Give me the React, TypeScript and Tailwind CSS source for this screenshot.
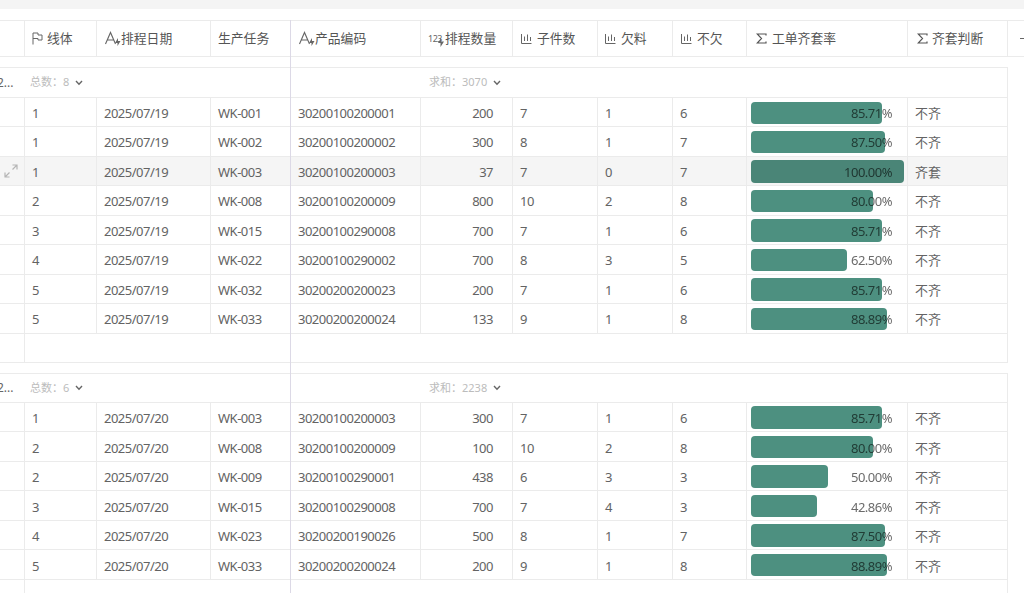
import React from 'react';

const AIcon = () => (
  <svg width="17" height="18" viewBox="0 0 17 18" fill="none" stroke="#666" strokeWidth="1.1" className="shrink-0">
    <path d="M1.5 14 L6.5 2.5 L11.5 14 M3.3 10 H9.7" />
    <path d="M14 8 V11 H16.5 L13.5 16 V13 H11 Z" fill="#666" stroke="none" />
  </svg>
);

const NumIcon = () => (
  <span className="relative inline-block h-[16px] w-[17px] shrink-0 text-[9px] leading-[16px] tracking-[-0.5px] text-[#666]">
    123
    <svg width="8" height="9" viewBox="0 0 8 9" className="absolute right-0 bottom-0">
      <path d="M4 0 V3.5 H7 L3.5 9 V5 H1 Z" fill="#666" />
    </svg>
  </span>
);

const ChartIcon = () => (
  <svg width="11" height="12" viewBox="0 0 11 12" fill="none" stroke="#666" strokeWidth="1" className="shrink-0">
    <path d="M0.5 1 V10.5 H10.5 M3.5 3.5 V8 M6.5 1.5 V8 M9.5 4 V8" />
  </svg>
);

const FlagIcon = () => (
  <svg width="11" height="13" viewBox="0 0 11 13" fill="none" stroke="#666" strokeWidth="1" className="shrink-0">
    <path d="M1 12.5 V1 H6 V3 H10 V8 H6 V6.5 H1" />
  </svg>
);

const SigmaIcon = () => (
  <svg width="11" height="11" viewBox="0 0 11 11" fill="none" stroke="#555" strokeWidth="1.2" className="shrink-0">
    <path d="M10 2.5 V1 H1.2 L5.5 5.5 L1.2 10 H10 V8.5" />
  </svg>
);

const PlusIcon = () => (
  <svg width="11" height="11" viewBox="0 0 11 11" fill="none" stroke="#666" strokeWidth="1.1" className="shrink-0">
    <path d="M0 5.5 H11 M5.5 0 V11" />
  </svg>
);

const Chevron = () => (
  <svg width="8" height="6" viewBox="0 0 8 6" fill="none" stroke="#666" strokeWidth="1.4" className="ml-[6px]">
    <path d="M1 1 L4 4.2 L7 1" />
  </svg>
);

const ExpandIcon = () => (
  <svg width="14" height="14" viewBox="0 0 14 14" fill="none" stroke="#b5b5b5" strokeWidth="1.2">
    <path d="M8.5 1 H13 V5.5 M13 1 L8.5 5.5 M5.5 13 H1 V8.5 M1 13 L5.5 8.5" />
  </svg>
);

const cellBorder = 'shrink-0 border-r border-[#ebebeb]';
const freezeBorder = 'shrink-0 border-r border-[#dcd9e6]';

const headers: { icon: React.ReactNode; label: string; cls: string }[] = [
  { icon: <FlagIcon />, label: '线体', cls: `${cellBorder} w-[72px] gap-[4px] pl-[7px]` },
  { icon: <AIcon />, label: '排程日期', cls: `${cellBorder} w-[114px] pl-[7px]` },
  { icon: null, label: '生产任务', cls: `${freezeBorder} w-[80px] pl-[7px]` },
  { icon: <AIcon />, label: '产品编码', cls: `${cellBorder} w-[130px] pl-[7px]` },
  { icon: <NumIcon />, label: '排程数量', cls: `${cellBorder} w-[92px] pl-[7px]` },
  { icon: <ChartIcon />, label: '子件数', cls: `${cellBorder} w-[85px] gap-[5px] pl-[8px]` },
  { icon: <ChartIcon />, label: '欠料', cls: `${cellBorder} w-[75px] gap-[5px] pl-[7px]` },
  { icon: <ChartIcon />, label: '不欠', cls: `${cellBorder} w-[74px] gap-[5px] pl-[8px]` },
  { icon: <SigmaIcon />, label: '工单齐套率', cls: `${cellBorder} w-[161px] gap-[5px] pl-[9px]` },
  { icon: <SigmaIcon />, label: '齐套判断', cls: `${cellBorder} w-[100px] gap-[4px] pl-[9px]` },
];

type Row = [string, string, string, string, number, number, number, number, number, string];

const group1: Row[] = [
  ['1', '2025/07/19', 'WK-001', '30200100200001', 200, 7, 1, 6, 85.71, '不齐'],
  ['1', '2025/07/19', 'WK-002', '30200100200002', 300, 8, 1, 7, 87.5, '不齐'],
  ['1', '2025/07/19', 'WK-003', '30200100200003', 37, 7, 0, 7, 100, '齐套'],
  ['2', '2025/07/19', 'WK-008', '30200100200009', 800, 10, 2, 8, 80, '不齐'],
  ['3', '2025/07/19', 'WK-015', '30200100290008', 700, 7, 1, 6, 85.71, '不齐'],
  ['4', '2025/07/19', 'WK-022', '30200100290002', 700, 8, 3, 5, 62.5, '不齐'],
  ['5', '2025/07/19', 'WK-032', '30200200200023', 200, 7, 1, 6, 85.71, '不齐'],
  ['5', '2025/07/19', 'WK-033', '30200200200024', 133, 9, 1, 8, 88.89, '不齐'],
];

const group2: Row[] = [
  ['1', '2025/07/20', 'WK-003', '30200100200003', 300, 7, 1, 6, 85.71, '不齐'],
  ['2', '2025/07/20', 'WK-008', '30200100200009', 100, 10, 2, 8, 80, '不齐'],
  ['2', '2025/07/20', 'WK-009', '30200100290001', 438, 6, 3, 3, 50, '不齐'],
  ['3', '2025/07/20', 'WK-015', '30200100290008', 700, 7, 4, 3, 42.86, '不齐'],
  ['4', '2025/07/20', 'WK-023', '30200200190026', 500, 8, 1, 7, 87.5, '不齐'],
  ['5', '2025/07/20', 'WK-033', '30200200200024', 200, 9, 1, 8, 88.89, '不齐'],
];

const DataRow = ({ row, hover, pad }: { row: Row; hover: boolean; pad: string }) => {
  const pct = row[8];
  return (
    <div className={`flex h-[29.45px] w-[1008px] border-b border-[#ebebeb] text-[13px] tracking-[-0.5px] text-[#636363] ${hover ? 'bg-[#f5f5f5]' : ''}`}>
      <div className={`${cellBorder} flex w-[25px] items-center justify-center pr-[3px]`}>{hover && <ExpandIcon />}</div>
      <div className={`${cellBorder} ${pad} flex w-[72px] items-center pl-[7px]`}>{row[0]}</div>
      <div className={`${cellBorder} ${pad} flex w-[114px] items-center pl-[7px]`}>{row[1]}</div>
      <div className={`${freezeBorder} ${pad} flex w-[80px] items-center pl-[7px]`}>{row[2]}</div>
      <div className={`${cellBorder} ${pad} flex w-[130px] items-center pl-[7px]`}>{row[3]}</div>
      <div className={`${cellBorder} ${pad} flex w-[92px] items-center justify-end pr-[19px]`}>{row[4]}</div>
      <div className={`${cellBorder} ${pad} flex w-[85px] items-center pl-[7px]`}>{row[5]}</div>
      <div className={`${cellBorder} ${pad} flex w-[75px] items-center pl-[7px]`}>{row[6]}</div>
      <div className={`${cellBorder} ${pad} flex w-[74px] items-center pl-[7px]`}>{row[7]}</div>
      <div className={`${cellBorder} ${pad} relative isolate flex w-[161px] items-center justify-end pr-[15px]`}>
        <div
          className={`absolute top-[3.5px] left-[4px] h-[22.5px] rounded-[4px] ${hover ? 'bg-[#4a8577]' : 'bg-[#4d9080]'}`}
          style={{ width: `${(pct / 100) * 153}px` }}
        />
        <span className="relative text-[#6b6b6b] mix-blend-multiply">{pct.toFixed(2)}%</span>
      </div>
      <div className={`${cellBorder} ${pad} flex w-[100px] items-center pl-[7px] tracking-normal`}>{row[9]}</div>
    </div>
  );
};

const GroupRow = ({ total, sum, tall }: { total: number; sum: number; tall?: boolean }) => (
  <div className={`flex w-[1008px] border-y border-r border-[#ebebeb] text-[11px] text-[#bcbcbc] ${tall ? 'h-[31px]' : 'h-[30px]'}`}>
    <div className="flex w-[30px] shrink-0 items-center overflow-hidden text-[12px] text-[#666]">
      <span className="ml-[-3px]">2...</span>
    </div>
    <div className={`${freezeBorder} flex w-[261px] items-center`}>
      <span>总数：{total}</span>
      <Chevron />
    </div>
    <div className="flex items-center pl-[138px]">
      <span>求和：{sum}</span>
      <Chevron />
    </div>
  </div>
);

const EmptyRow = () => (
  <div className="flex h-[29.4px] w-[1008px] border-b border-r border-[#ebebeb]">
    <div className={`${cellBorder} w-[25px]`} />
    <div className={`${freezeBorder} w-[266px]`} />
  </div>
);

export default function App() {
  return (
    <div
      className="relative h-[593px] w-[1024px] overflow-hidden bg-white"
      style={{ fontFamily: '"Noto Sans", "Noto Sans CJK SC", sans-serif' }}
    >
      <div className="h-[9px] bg-[#f4f4f4]" />
      <div className="h-[11px]" />
      <div className="flex h-[37px] border-y border-[#ebebeb] text-[12.8px] text-[#555]">
        <div className={`${cellBorder} w-[25px]`} />
        {headers.map((h) => (
          <div key={h.label} className={`flex items-center ${h.cls}`}>
            {h.icon}
            <span>{h.label}</span>
          </div>
        ))}
        <div className="flex flex-1 items-center pl-[12px]">
          <PlusIcon />
        </div>
      </div>
      <div className="h-[10px]" />
      <GroupRow total={8} sum={3070} tall />
      {group1.map((r) => (
        <DataRow key={r[2]} row={r} hover={r[2] === 'WK-003'} pad="pt-[3px]" />
      ))}
      <EmptyRow />
      <div className="h-[10px]" />
      <GroupRow total={6} sum={2238} />
      {group2.map((r) => (
        <DataRow key={r[2]} row={r} hover={false} pad="pt-[4px]" />
      ))}
      <EmptyRow />
      <div className="pointer-events-none absolute top-[20px] bottom-0 left-[290px] w-px bg-[#dcd9e6]" />
    </div>
  );
}
